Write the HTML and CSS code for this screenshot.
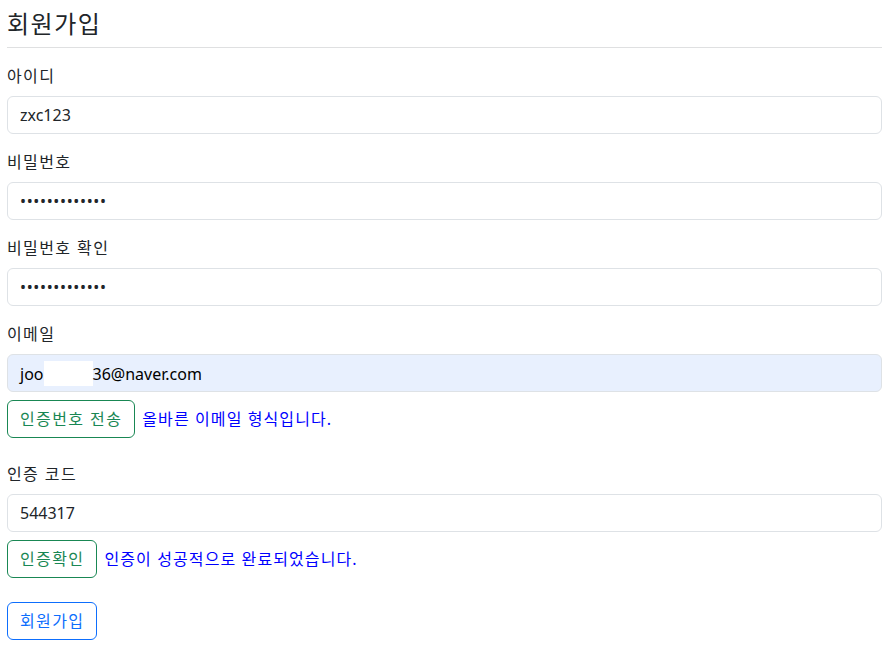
FILE: index.html
```html
<!DOCTYPE html>
<html lang="ko">
<head>
  <meta charset="UTF-8" />
  <meta name="viewport" content="width=device-width, initial-scale=1.0"/>
  <title>회원가입</title>
  <link rel="stylesheet" href="styles.css">
</head>
<body>
  <div class="container">
    <h3 class="title">회원가입</h3>
    <hr class="divider" />

    <form id="joinForm">
      <div class="field">
        <label for="userId">아이디</label>
        <input type="text" id="userId" class="form-control" value="zxc123" />
      </div>
      <div class="field">
        <label for="userPw">비밀번호</label>
        <input type="password" id="userPw" class="form-control pw" value="abcdefghijklm" />
      </div>
      <div class="field">
        <label for="userPw2">비밀번호 확인</label>
        <input type="password" id="userPw2" class="form-control pw" value="abcdefghijklm" />
      </div>
      <div class="field field-wide">
        <label for="userEmail">이메일</label>
        <div id="userEmail" class="form-control autofill">joo<span class="masked"></span>36@naver.com</div>
        <div class="action">
          <button type="button" class="btn btn-success">인증번호 전송</button>
          <span class="msg">올바른 이메일 형식입니다.</span>
        </div>
      </div>
      <div class="field field-wide">
        <label for="authCode">인증 코드</label>
        <input type="text" id="authCode" class="form-control" value="544317" />
        <div class="action">
          <button type="button" class="btn btn-success">인증확인</button>
          <span class="msg">인증이 성공적으로 완료되었습니다.</span>
        </div>
      </div>
      <button type="submit" class="btn btn-primary">회원가입</button>
    </form>
  </div>
</body>
</html>
```

FILE: styles.css
```css
body {
  margin: 0;
  font-family: "Noto Sans", "Noto Sans CJK KR", sans-serif;
  font-size: 16px;
  line-height: 24px;
  color: #212529;
  background: #fff;
}
.container {
  padding: 0 7px;
}
.title {
  margin: 7px 0 6px;
  font-size: 24px;
  font-weight: 400;
  line-height: 34px;
  letter-spacing: 1.5px;
}
.divider {
  border: 0;
  border-top: 1px solid #dfe0e1;
  margin: 0 0 16px;
}
.field {
  margin-bottom: 16px;
}
.field-wide {
  margin-bottom: 24px;
}
label {
  display: block;
  margin-bottom: 8px;
  letter-spacing: 1.4px;
}
.form-control {
  display: block;
  box-sizing: border-box;
  width: 100%;
  height: 38px;
  padding: 6px 12px;
  font-family: inherit;
  font-size: 16px;
  line-height: 24px;
  color: #212529;
  background: #fff;
  border: 1px solid #dee2e6;
  border-radius: 6px;
}
.pw {
  letter-spacing: 0.65px;
}
.autofill {
  background: #e8f0fe;
  color: #000;
}
.masked {
  display: inline-block;
  width: 49px;
  height: 25px;
  vertical-align: -6px;
  background: #fff;
}
.action {
  display: flex;
  align-items: center;
  gap: 7px;
  margin-top: 8px;
}
.btn {
  padding: 6px 12px;
  font-family: inherit;
  font-size: 16px;
  line-height: 24px;
  letter-spacing: 1.4px;
  background: transparent;
  border: 1px solid;
  border-radius: 6px;
  cursor: pointer;
}
.btn-success {
  color: #198754;
  border-color: #198754;
}
.btn-primary {
  color: #0d6efd;
  border-color: #0d6efd;
}
.msg {
  color: #0000ff;
  letter-spacing: 1.1px;
}
```
